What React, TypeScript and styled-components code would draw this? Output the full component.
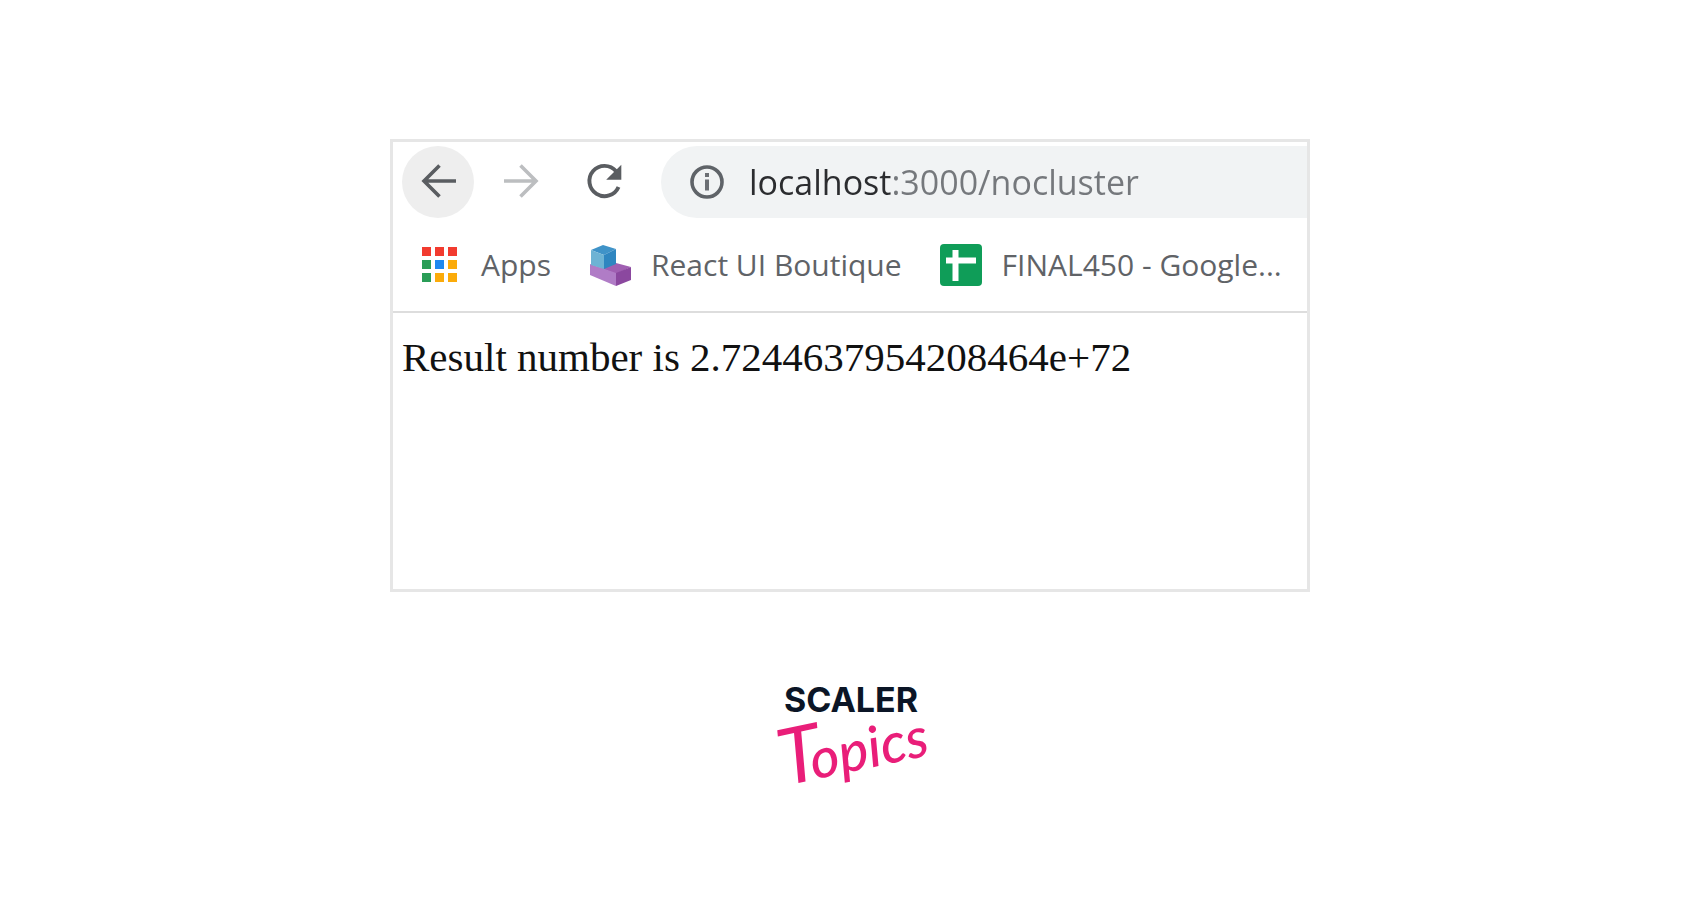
import React from 'react';
import styled, { createGlobalStyle } from 'styled-components';

const GlobalStyle = createGlobalStyle`
  * {
    box-sizing: border-box;
  }
  body {
    margin: 0;
    background: #fff;
    font-family: 'Open Sans', 'Noto Sans', sans-serif;
  }
`;

const Page = styled.main`
  display: flex;
  flex-direction: column;
  align-items: center;
  padding: 139px 24px 72px;
`;

const BrowserFrame = styled.section`
  width: 100%;
  max-width: 920px;
  border: 3px solid #e6e6e6;
  background: #fff;
  overflow: hidden;
`;

const Toolbar = styled.nav`
  display: flex;
  align-items: center;
  gap: 11px;
  padding: 4px 0 0 9px;
`;

const NavButton = styled.button<{ $active?: boolean }>`
  display: flex;
  flex: none;
  align-items: center;
  justify-content: center;
  width: 72px;
  height: 72px;
  padding: 0;
  border: 0;
  border-radius: 50%;
  background: ${(p) => (p.$active ? '#eeeeee' : 'transparent')};
  color: #5a5d61;

  &:disabled {
    color: #bcbec0;
  }
`;

const AddressBar = styled.label`
  display: flex;
  flex: 1;
  align-items: center;
  gap: 24px;
  min-width: 0;
  height: 72px;
  margin-left: 10px;
  padding-left: 28px;
  border-radius: 36px 0 0 36px;
  background: #f1f3f4;
`;

const AddressInput = styled.input`
  flex: 1;
  min-width: 0;
  height: 56px;
  padding: 0;
  border: 0;
  outline: 0;
  color: transparent;
  background: linear-gradient(to right, #2b2c2f 143px, #75787c 143px);
  background-clip: text;
  -webkit-background-clip: text;
  font-family: inherit;
  font-size: 34px;
`;

const BookmarkBar = styled.nav`
  display: flex;
  align-items: center;
  gap: 38px;
  height: 95px;
  padding: 0 16px 0 26px;
  border-bottom: 2px solid #dddddd;
`;

const Bookmark = styled.a`
  display: flex;
  flex: none;
  align-items: center;
  gap: 20px;
  color: #606367;
  font-size: 30px;
  line-height: 40px;
  text-decoration: none;
  white-space: nowrap;
`;

const Document = styled.article`
  min-height: 276px;
  padding: 20px 9px;
  color: #111;
  font-family: 'Liberation Serif', serif;
  font-size: 41px;
  line-height: 48px;

  p {
    margin: 0;
  }
`;

const Brand = styled.footer`
  display: flex;
  margin-top: 80px;
`;

const appColors = [
  '#f23b2f', '#f23b2f', '#f23b2f',
  '#2a9d57', '#1e88f0', '#fbab0a',
  '#2a9d57', '#fbab0a', '#fbab0a',
];

function BackArrow() {
  return (
    <svg width="36" height="36" viewBox="0 0 36 36" fill="none" stroke="currentColor" strokeWidth="3.6">
      <path d="M36 17H4M19.500 1.500 4 17l15.500 15.500" />
    </svg>
  );
}

function ForwardArrow() {
  return (
    <svg width="36" height="36" viewBox="0 0 36 36" fill="none" stroke="currentColor" strokeWidth="3.6">
      <path d="M1 17h32M17.500 1.500 33 17 17.500 32.500" />
    </svg>
  );
}

function Reload() {
  return (
    <svg width="52" height="52" viewBox="0 0 24 24" fill="none">
      <path d="M17.600 7A7 7 0 1 0 18.700 14.300" stroke="currentColor" strokeWidth="1.8" />
      <path d="M20 4v7h-7z" fill="currentColor" />
    </svg>
  );
}

function InfoIcon() {
  return (
    <svg width="36" height="36" viewBox="0 0 36 36" fill="none">
      <circle cx="18" cy="18" r="15" stroke="#5f6368" strokeWidth="3.6" />
      <path d="M18 9v4M18 15.500v11" stroke="#6c6f74" strokeWidth="4" />
    </svg>
  );
}

function AppsIcon() {
  return (
    <svg width="42" height="42" viewBox="0 0 42 42">
      {appColors.map((color, i) => (
        <rect key={i} x={3 + (i % 3) * 13} y={3 + Math.floor(i / 3) * 13} width="9" height="9" fill={color} />
      ))}
    </svg>
  );
}

function BlocksIcon() {
  return (
    <svg width="42" height="42" viewBox="0 0 42 42">
      <path d="M1 20l12 4 14-5 15 4-15 7z" fill="#a05fb2" />
      <path d="M1 20l26 9v13L1 31z" fill="#b07cc6" />
      <path d="M27 29l15-6v13l-15 6z" fill="#8b489f" />
      <path d="M2 6 14 1l13 4-12 6z" fill="#3f93c8" />
      <path d="M2 6l13 5v14L2 21z" fill="#6db3d4" />
      <path d="M15 11l12-6v15l-12 5z" fill="#2f86c0" />
    </svg>
  );
}

function SheetIcon() {
  return (
    <svg width="42" height="42" viewBox="0 0 42 42">
      <rect width="42" height="42" rx="4" fill="#0f9d58" />
      <path d="M6 16.500h30M15.500 6v31" stroke="#fff" strokeWidth="6" />
    </svg>
  );
}

function ScalerTopicsLogo() {
  return (
    <svg width="180" height="148" viewBox="0 0 180 148" role="img" aria-label="Scaler Topics">
      <text x="24" y="40" fill="#0b1526" fontFamily="Inter, sans-serif" fontSize="34" fontWeight="700">
        SCALER
      </text>
      <g transform="rotate(-12 24 114)" fill="#e91e79" fontFamily="Lato, sans-serif" fontStyle="italic">
        <text x="24" y="114">
          <tspan fontSize="78">T</tspan>
          <tspan dx="-12" fontSize="56" fontWeight="500">opics</tspan>
        </text>
      </g>
    </svg>
  );
}

export default function App() {
  return (
    <>
      <GlobalStyle />
      <Page>
        <BrowserFrame>
          <Toolbar aria-label="Navigation">
            <NavButton $active aria-label="Back">
              <BackArrow />
            </NavButton>
            <NavButton disabled aria-label="Forward">
              <ForwardArrow />
            </NavButton>
            <NavButton aria-label="Reload">
              <Reload />
            </NavButton>
            <AddressBar>
              <InfoIcon />
              <AddressInput aria-label="Address" defaultValue="localhost:3000/nocluster" spellCheck={false} />
            </AddressBar>
          </Toolbar>
          <BookmarkBar aria-label="Bookmarks">
            <Bookmark href="#apps">
              <AppsIcon />
              Apps
            </Bookmark>
            <Bookmark href="#react-ui-boutique">
              <BlocksIcon />
              React UI Boutique
            </Bookmark>
            <Bookmark href="#final450">
              <SheetIcon />
              FINAL450 - Google...
            </Bookmark>
          </BookmarkBar>
          <Document>
            <p>Result number is 2.7244637954208464e+72</p>
          </Document>
        </BrowserFrame>
        <Brand>
          <ScalerTopicsLogo />
        </Brand>
      </Page>
    </>
  );
}
